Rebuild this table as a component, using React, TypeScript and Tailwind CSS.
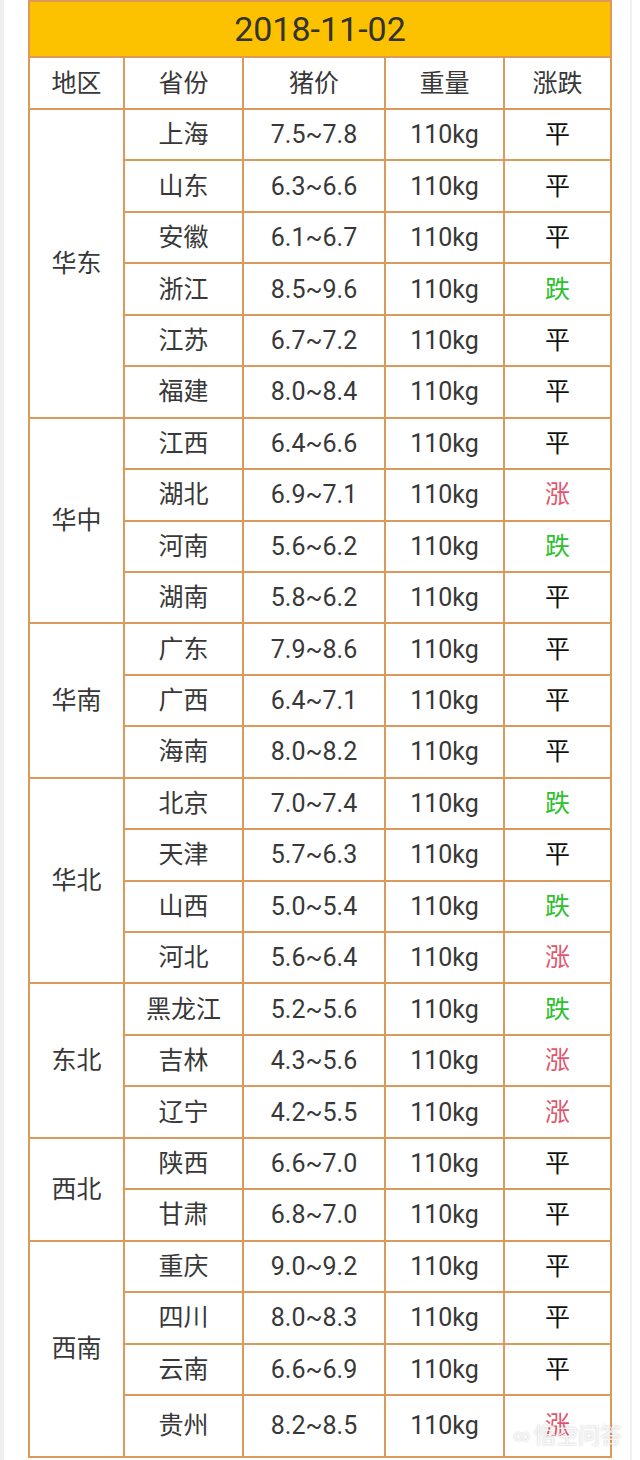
import React from "react";

type Row = { province: string; price: string; trend: "平" | "涨" | "跌" };
type Region = { name: string; rows: Row[] };

const regions: Region[] = [
  {
    name: "华东",
    rows: [
      { province: "上海", price: "7.5~7.8", trend: "平" },
      { province: "山东", price: "6.3~6.6", trend: "平" },
      { province: "安徽", price: "6.1~6.7", trend: "平" },
      { province: "浙江", price: "8.5~9.6", trend: "跌" },
      { province: "江苏", price: "6.7~7.2", trend: "平" },
      { province: "福建", price: "8.0~8.4", trend: "平" },
    ],
  },
  {
    name: "华中",
    rows: [
      { province: "江西", price: "6.4~6.6", trend: "平" },
      { province: "湖北", price: "6.9~7.1", trend: "涨" },
      { province: "河南", price: "5.6~6.2", trend: "跌" },
      { province: "湖南", price: "5.8~6.2", trend: "平" },
    ],
  },
  {
    name: "华南",
    rows: [
      { province: "广东", price: "7.9~8.6", trend: "平" },
      { province: "广西", price: "6.4~7.1", trend: "平" },
      { province: "海南", price: "8.0~8.2", trend: "平" },
    ],
  },
  {
    name: "华北",
    rows: [
      { province: "北京", price: "7.0~7.4", trend: "跌" },
      { province: "天津", price: "5.7~6.3", trend: "平" },
      { province: "山西", price: "5.0~5.4", trend: "跌" },
      { province: "河北", price: "5.6~6.4", trend: "涨" },
    ],
  },
  {
    name: "东北",
    rows: [
      { province: "黑龙江", price: "5.2~5.6", trend: "跌" },
      { province: "吉林", price: "4.3~5.6", trend: "涨" },
      { province: "辽宁", price: "4.2~5.5", trend: "涨" },
    ],
  },
  {
    name: "西北",
    rows: [
      { province: "陕西", price: "6.6~7.0", trend: "平" },
      { province: "甘肃", price: "6.8~7.0", trend: "平" },
    ],
  },
  {
    name: "西南",
    rows: [
      { province: "重庆", price: "9.0~9.2", trend: "平" },
      { province: "四川", price: "8.0~8.3", trend: "平" },
      { province: "云南", price: "6.6~6.9", trend: "平" },
      { province: "贵州", price: "8.2~8.5", trend: "涨" },
    ],
  },
];

const cell = "border-2 border-[#dc9a5a] text-center align-middle p-0";

function TrendText({ trend }: { trend: Row["trend"] }) {
  if (trend === "涨") return <span className="text-[#e0566e]">涨</span>;
  if (trend === "跌") return <span className="text-[#2fbf2f]">跌</span>;
  return <span className="text-[#111]">平</span>;
}

export default function App() {
  const lastProvince = "贵州";
  return (
    <div
      className="w-[640px] h-[1460px] bg-white relative overflow-hidden text-[#383838]"
      style={{ fontFamily: "Roboto, 'Noto Sans CJK SC', sans-serif" }}
    >
      <div className="absolute left-0 top-0 h-full w-[4px] bg-[#eeeeee]" />
      <div className="absolute right-[8px] top-0 h-full w-[2px] bg-[#f0f0f0]" />
      <div className="pl-[28px]">
        <table className="border-collapse w-[582px] table-fixed text-[25px] leading-none">
          <colgroup>
            <col className="w-[95px]" />
            <col className="w-[119px]" />
            <col className="w-[142px]" />
            <col className="w-[119px]" />
            <col className="w-[107px]" />
          </colgroup>
          <thead>
            <tr className="h-[56px]">
              <th colSpan={5} className={`${cell} bg-[#fcc200] font-normal text-[34px] text-[#333]`}>
                2018-11-02
              </th>
            </tr>
            <tr className="h-[52px]">
              {["地区", "省份", "猪价", "重量", "涨跌"].map((h) => (
                <th key={h} className={`${cell} font-normal`}>
                  {h}
                </th>
              ))}
            </tr>
          </thead>
          <tbody>
            {regions.map((region) =>
              region.rows.map((row, i) => (
                <tr
                  key={row.province}
                  className={row.province === lastProvince ? "h-[62px]" : "h-[51.45px]"}
                >
                  {i === 0 && (
                    <td rowSpan={region.rows.length} className={cell}>
                      {region.name}
                    </td>
                  )}
                  <td className={cell}>{row.province}</td>
                  <td className={cell}>{row.price}</td>
                  <td className={cell}>110kg</td>
                  <td className={cell}>
                    <TrendText trend={row.trend} />
                  </td>
                </tr>
              ))
            )}
          </tbody>
        </table>
      </div>
      {/* watermark */}
      <div className="absolute right-[18px] bottom-[8px] flex items-center gap-1 text-[22px] text-white/80 [text-shadow:0_0_2px_rgba(0,0,0,0.25)]">
        <span className="text-[16px]">∞</span>
        <span>悟空问答</span>
      </div>
    </div>
  );
}
